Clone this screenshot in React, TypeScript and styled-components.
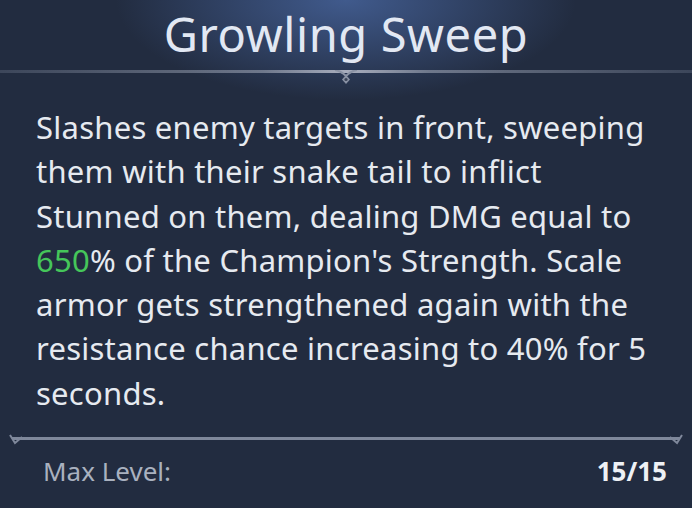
import React from "react";
import styled, { createGlobalStyle } from "styled-components";

const Global = createGlobalStyle`
  html, body { margin: 0; padding: 0; background: #222c40; }
  body { width: 692px; height: 508px; overflow: hidden; }
`;

const Card = styled.div`
  width: 692px;
  height: 508px;
  box-sizing: border-box;
  background:
    radial-gradient(ellipse 230px 100px at 346px 0px, rgba(72, 102, 160, 0.8), rgba(72, 102, 160, 0) 100%),
    #222c40;
  font-family: "Noto Sans", "Open Sans", sans-serif;
  display: flex;
  flex-direction: column;
`;

const Header = styled.div`
  height: 70px;
  display: flex;
  align-items: center;
  justify-content: center;
`;

const Title = styled.h1`
  margin: 0;
  margin-top: -2px;
  font-weight: 400;
  font-size: 47px;
  line-height: 60px;
  color: #e2e8f3;
  letter-spacing: 0.6px;
`;

const Divider = styled.div`
  height: 3px;
  background: linear-gradient(
    90deg,
    rgba(110, 120, 140, 0.35),
    rgba(140, 148, 165, 0.7) 38%,
    rgba(175, 180, 195, 0.95) 50%,
    rgba(140, 148, 165, 0.7) 62%,
    rgba(110, 120, 140, 0.35)
  );
  position: relative;
`;

const Gem = styled.svg`
  position: absolute;
  left: 334px;
  top: 0px;
`;

const Body = styled.p`
  margin: 0;
  padding: 32px 20px 0 36px;
  font-size: 31px;
  line-height: 44.3px;
  letter-spacing: 0.25px;
  color: #e6eaf0;
  flex: 1;
`;

const Green = styled.span`
  color: #45c65a;
`;

const BottomRule = styled.div`
  margin: 0 12px;
  height: 3px;
  background: #7f889b;
  position: relative;
`;

const Hook = styled.svg<{ $right?: boolean }>`
  position: absolute;
  top: -3px;
  ${(p) => (p.$right ? "right: -3px;" : "left: -3px;")}
`;

const Footer = styled.div`
  height: 62px;
  display: flex;
  align-items: center;
  justify-content: space-between;
  padding: 0 25px 6px 43px;
  font-size: 26px;
`;

const Label = styled.span`
  color: #a9b1bf;
`;

const Value = styled.span`
  color: #eef1f5;
  font-weight: 700;
`;

export default function App() {
  return (
    <>
      <Global />
      <Card>
        <Header>
          <Title>Growling Sweep</Title>
        </Header>
        <Divider>
          <Gem width="24" height="16" viewBox="0 0 24 16">
            <path d="M1 0 Q7 1 12 6 Q17 1 23 0" stroke="#8a92a4" strokeWidth="2.2" fill="none" />
            <path d="M12 5 L16 9.5 L12 14 L8 9.5 Z" fill="#8a92a4" />
            <circle cx="12" cy="9.5" r="1.6" fill="#3a4458" />
          </Gem>
        </Divider>
        <Body>
          Slashes enemy targets in front, sweeping
          <br />
          them with their snake tail to inflict
          <br />
          Stunned on them, dealing DMG equal to
          <br />
          <Green>650</Green>% of the Champion's Strength. Scale
          <br />
          armor gets strengthened again with the
          <br />
          resistance chance increasing to 40% for 5
          <br />
          seconds.
        </Body>
        <BottomRule>
          <Hook width="14" height="11" viewBox="0 0 14 11">
            <path d="M1 1 L6 9 L13 3" stroke="#7f889b" strokeWidth="2" fill="none" />
          </Hook>
          <Hook $right width="14" height="11" viewBox="0 0 14 11">
            <path d="M1 3 L8 9 L13 1" stroke="#7f889b" strokeWidth="2" fill="none" />
          </Hook>
        </BottomRule>
        <Footer>
          <Label>Max Level:</Label>
          <Value>15/15</Value>
        </Footer>
      </Card>
    </>
  );
}
